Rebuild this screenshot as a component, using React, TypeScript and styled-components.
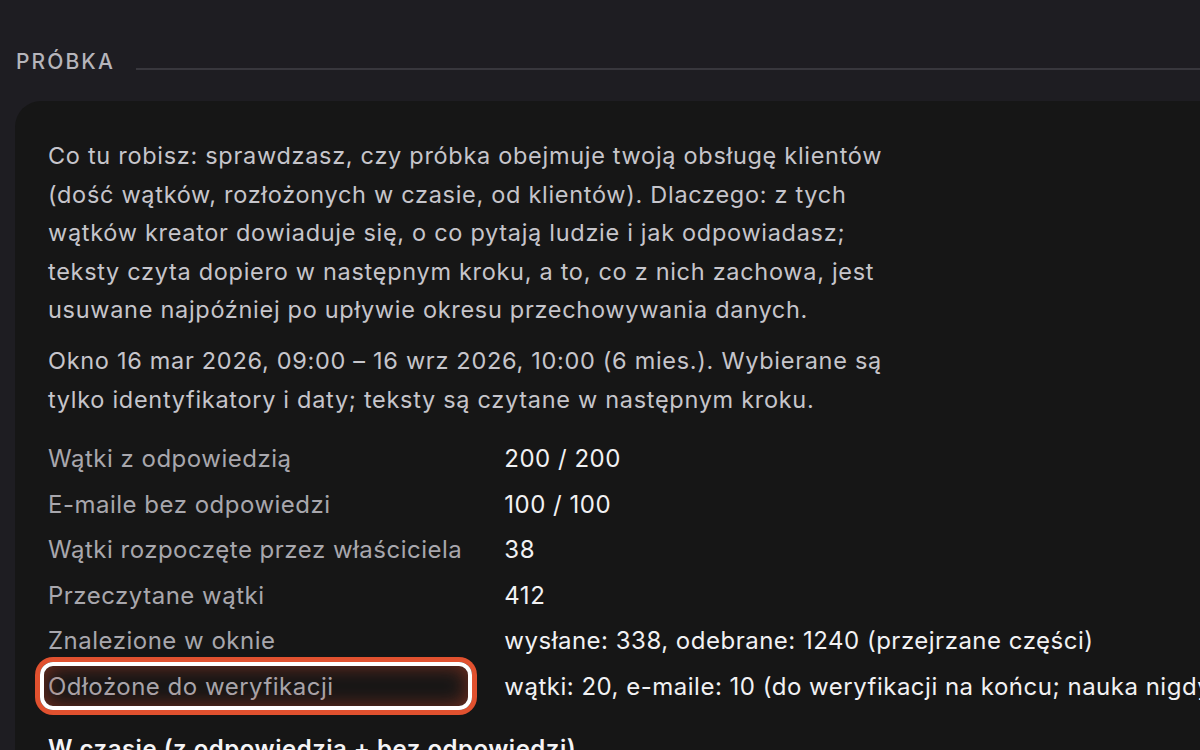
import React from "react";
import styled, { createGlobalStyle } from "styled-components";

const Global = createGlobalStyle`
  html, body { margin: 0; padding: 0; background: #1e1d22; overflow: hidden; }
  body { font-family: Inter, "Noto Sans", sans-serif; -webkit-font-smoothing: antialiased; }
`;

const Page = styled.div`
  width: 1400px;
  padding: 45px 0 0 16px;
  box-sizing: border-box;
`;

const SectionHead = styled.div`
  display: flex;
  align-items: center;
  gap: 21px;
  height: 33px;
`;

const SectionTitle = styled.h2`
  margin: 0;
  font-size: 21px;
  font-weight: 500;
  letter-spacing: 0.1em;
  color: #b6b5bb;
  line-height: 33px;
`;

const Rule = styled.div`
  flex: 1;
  height: 2px;
  background: #38373d;
  margin-top: 14px;
`;

const Card = styled.div`
  margin-top: 23px;
  margin-left: -1px;
  background: #161616;
  border-radius: 26px;
  padding: 36px 33px 0 33px;
  min-height: 700px;
`;

const Para = styled.p`
  margin: 0 0 12px;
  max-width: 862px;
  font-size: 23.5px;
  letter-spacing: 0.7px;
  line-height: 38.6px;
  color: #c6c5cb;
`;

const Stats = styled.div`
  display: grid;
  grid-template-columns: max-content 1fr;
  column-gap: 42px;
  row-gap: 12.5px;
  margin-top: 23px;
`;

const Label = styled.div<{ $marked?: boolean }>`
  position: relative;
  font-size: 24px;
  letter-spacing: 0.5px;
  line-height: 33px;
  color: #a8a7ad;
  ${(p) =>
    p.$marked &&
    `
    &::after {
      content: "";
      position: absolute;
      top: -8px;
      bottom: -7px;
      left: -8px;
      right: -10px;
      border: 4px solid #ffffff;
      border-radius: 13px;
      box-shadow: 0 0 0 5px #e1512f, inset 0 0 20px rgba(200, 70, 40, 0.55);
      pointer-events: none;
    }
  `}
`;

const Value = styled.div`
  font-size: 24px;
  letter-spacing: 0.5px;
  line-height: 33px;
  color: #f1f1f3;
  white-space: nowrap;
`;

const SubHead = styled.h3`
  margin: 29px 0 0;
  font-size: 24px;
  letter-spacing: 0.5px;
  line-height: 33px;
  font-weight: 600;
  color: #f4f4f6;
`;

const rows: [string, string][] = [
  ["Wątki z odpowiedzią", "200 / 200"],
  ["E-maile bez odpowiedzi", "100 / 100"],
  ["Wątki rozpoczęte przez właściciela", "38"],
  ["Przeczytane wątki", "412"],
  ["Znalezione w oknie", "wysłane: 338, odebrane: 1240 (przejrzane części)"],
  ["Odłożone do weryfikacji", "wątki: 20, e-maile: 10 (do weryfikacji na końcu; nauka nigdy nie obejmuje tych wątków)"],
];

export default function App() {
  return (
    <>
      <Global />
      <Page>
        <SectionHead>
          <SectionTitle>PRÓBKA</SectionTitle>
          <Rule />
        </SectionHead>
        <Card>
          <Para>
            Co tu robisz: sprawdzasz, czy próbka obejmuje twoją obsługę klientów (dość wątków, rozłożonych w czasie, od klientów). Dlaczego: z tych wątków kreator dowiaduje się, o co pytają ludzie i jak odpowiadasz; teksty czyta dopiero w następnym kroku, a to, co z nich zachowa, jest usuwane najpóźniej po upływie okresu przechowywania danych.
          </Para>
          <Para>
            Okno 16 mar 2026, 09:00 – 16 wrz 2026, 10:00 (6 mies.). Wybierane są tylko identyfikatory i daty; teksty są czytane w następnym kroku.
          </Para>
          <Stats>
            {rows.map(([l, v], i) => (
              <React.Fragment key={l}>
                <Label $marked={i === rows.length - 1}>{l}</Label>
                <Value>{v}</Value>
              </React.Fragment>
            ))}
          </Stats>
          <SubHead>W czasie (z odpowiedzią + bez odpowiedzi)</SubHead>
        </Card>
      </Page>
    </>
  );
}
